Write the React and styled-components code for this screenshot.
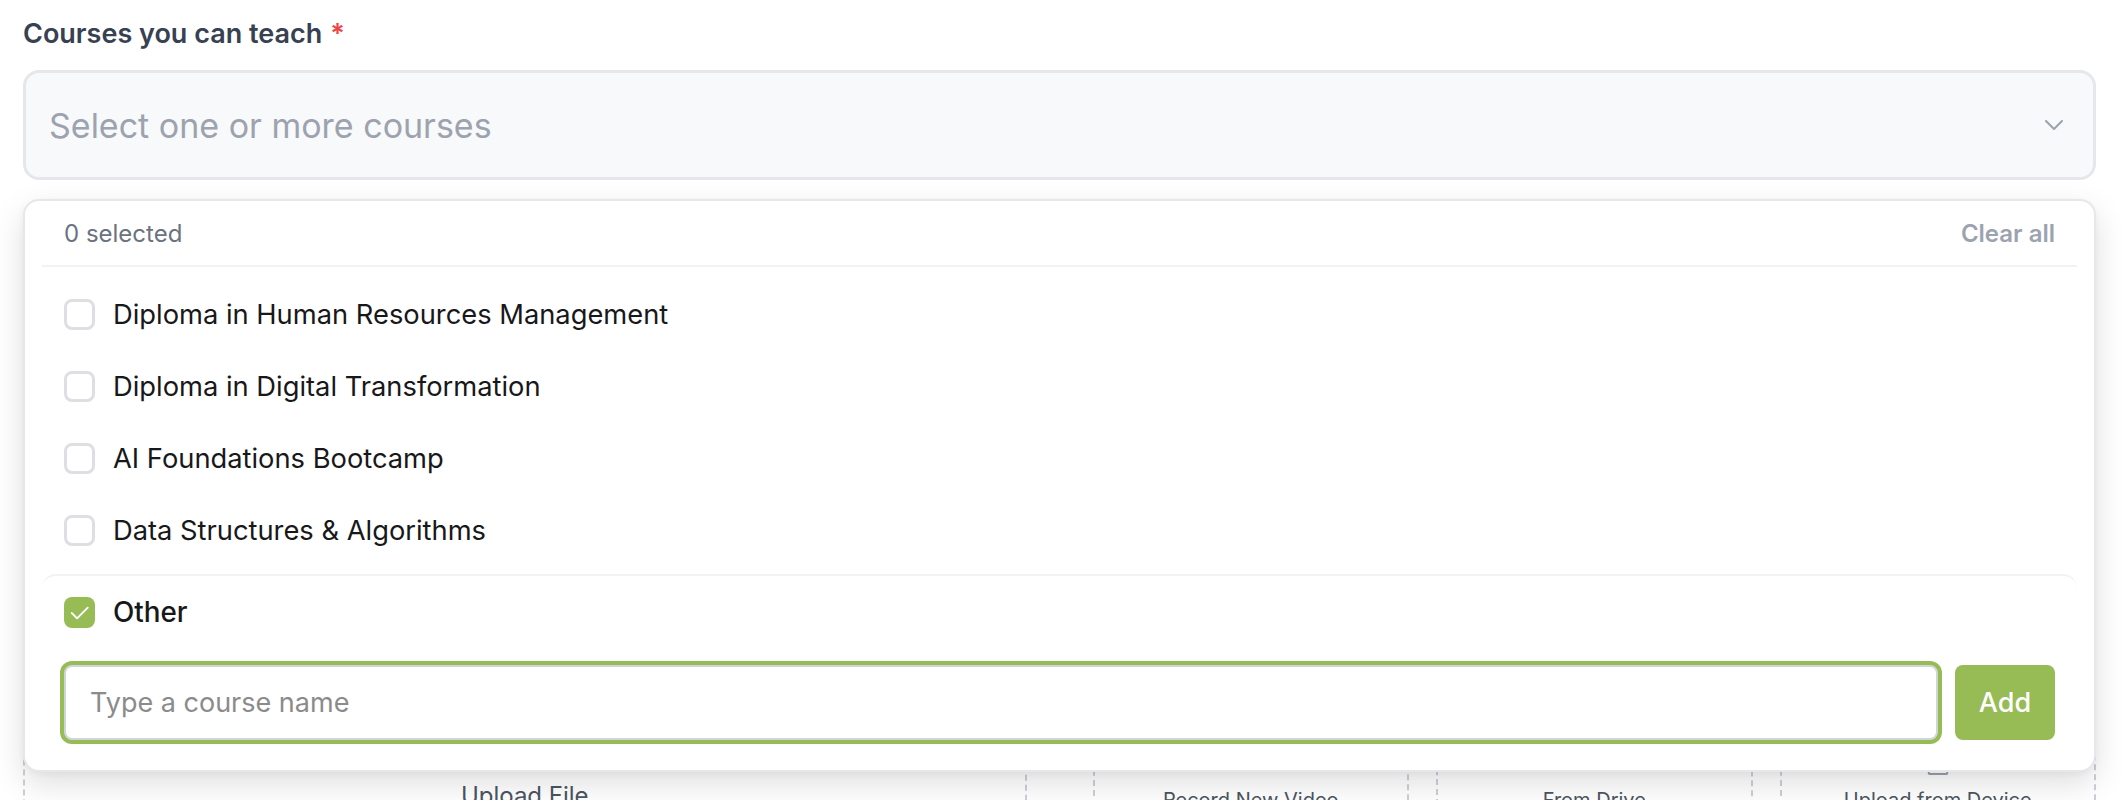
import React from 'react';
import styled, { createGlobalStyle } from 'styled-components';
import { Upload, Video, Laptop } from 'lucide-react';

const GlobalStyle = createGlobalStyle`
  * { box-sizing: border-box; }
  body {
    margin: 0;
    background: #ffffff;
    font-family: Inter, "Noto Sans", sans-serif;
    -webkit-font-smoothing: antialiased;
  }
`;

const Page = styled.div`
  padding: 16px 26px 0 23px;
`;

const Label = styled.div`
  font-size: 27px;
  line-height: 36px;
  font-weight: 600;
  color: #374151;
  margin-bottom: 18px;
`;

const Required = styled.span`
  color: #ef4444;
  margin-left: 8px;
`;

const Field = styled.div`
  position: relative;
`;

const SelectBox = styled.div`
  height: 110px;
  display: flex;
  align-items: center;
  justify-content: space-between;
  padding: 0 30px 0 23px;
  border: 3px solid #e5e7eb;
  border-radius: 16px;
  background: #f8f9fb;
  font-size: 34px;
  color: #9ca3af;
`;

// --- dropdown panel, floats over the form below ---
const Dropdown = styled.div`
  position: absolute;
  top: calc(100% + 19px);
  left: 0;
  right: 0;
  z-index: 10;
  background: #ffffff;
  border: 2px solid #e6e7ea;
  border-radius: 16px;
  padding: 0 17px;
  box-shadow: 0 12px 32px rgba(0, 0, 0, 0.13), 0 2px 6px rgba(0, 0, 0, 0.04);
`;

const PanelHeader = styled.div`
  height: 66px;
  display: flex;
  align-items: center;
  justify-content: space-between;
  padding: 0 22px;
  border-bottom: 2px solid #f1f2f4;
  font-size: 24px;
`;

const Count = styled.span`
  color: #6b7280;
`;

const ClearAll = styled.button`
  border: none;
  background: none;
  padding: 0;
  font: inherit;
  font-weight: 600;
  color: #9ca3af;
  cursor: pointer;
`;

const OptionList = styled.div`
  padding: 11px 0 8px;
`;

const OptionRow = styled.label`
  height: 72px;
  display: flex;
  align-items: center;
  gap: 18px;
  padding-left: 22px;
  font-size: ${p => (p.$strong ? '27.8px' : '27.3px')};
  font-weight: ${p => (p.$strong ? 500 : 400)};
  color: #18181b;
  cursor: pointer;
`;

const Box = styled.span`
  width: 31px;
  height: 31px;
  flex: none;
  display: flex;
  align-items: center;
  justify-content: center;
  border-radius: 8px;
  border: ${p => (p.$checked ? 'none' : '3px solid #dedfe2')};
  background: ${p => (p.$checked ? '#97bb55' : '#ffffff')};
`;

const OtherSection = styled.div`
  border-top: 2px solid #f1f2f4;
  border-radius: 14px 14px 0 0;
  padding-bottom: 30px;
`;

const AddRow = styled.div`
  display: flex;
  align-items: center;
  gap: 17px;
  margin-top: 17px;
  padding: 0 22px;
`;

const CourseInput = styled.input`
  flex: 1;
  height: 75px;
  border: 2px solid #d1d5db;
  border-radius: 8px;
  box-shadow: 0 0 0 4px #97bb55;
  padding: 0 24px;
  font-family: inherit;
  font-size: 27px;
  color: #18181b;
  outline: none;

  &::placeholder {
    color: #8b8b8b;
  }
`;

const AddButton = styled.button`
  width: 100px;
  height: 75px;
  border: none;
  border-radius: 8px;
  background: #97bb55;
  color: #ffffff;
  font-family: inherit;
  font-size: 27px;
  font-weight: 500;
  cursor: pointer;
`;

// --- upload choices, mostly hidden under the open dropdown ---
const UploadGrid = styled.div`
  margin-top: 510px;
  display: grid;
  grid-template-columns: 1fr 1fr;
  gap: 66px;
`;

const SourceGrid = styled.div`
  display: grid;
  grid-template-columns: repeat(3, 1fr);
  gap: 27px;
`;

const UploadCard = styled.div`
  height: 220px;
  border: 2px dashed #cdd1d7;
  border-radius: 12px;
  display: flex;
  flex-direction: column;
  align-items: center;
  padding-top: ${p => (p.$big ? '36px' : '62px')};
  gap: ${p => (p.$big ? '12px' : '8px')};
  color: #9ca3af;
`;

const IconSlot = styled.div`
  height: 24px;
  display: flex;
  align-items: flex-start;
`;

const CardLabel = styled.span`
  font-size: ${p => (p.$big ? '24px' : '20px')};
  line-height: ${p => (p.$big ? '32px' : '28px')};
  color: #4b5563;
`;

const Chevron = () => (
  <svg width="18" height="10" viewBox="0 0 18 10" fill="none">
    <path d="M1 1l8 8 8-8" stroke="#9ca3af" strokeWidth="2" strokeLinecap="round" strokeLinejoin="round" />
  </svg>
);

const Tick = () => (
  <svg width="31" height="31" viewBox="0 0 32 32" fill="none">
    <path d="M8 16.5l5.5 5.5L24.5 11" stroke="#ffffff" strokeWidth="2" strokeLinecap="round" strokeLinejoin="round" />
  </svg>
);

const courses = [
  'Diploma in Human Resources Management',
  'Diploma in Digital Transformation',
  'AI Foundations Bootcamp',
  'Data Structures & Algorithms',
];

const App = () => (
  <>
    <GlobalStyle />
    <Page>
      <Label>
        Courses you can teach<Required>*</Required>
      </Label>
      <Field>
        <SelectBox>
          <span>Select one or more courses</span>
          <Chevron />
        </SelectBox>
        <Dropdown>
          <PanelHeader>
            <Count>0 selected</Count>
            <ClearAll>Clear all</ClearAll>
          </PanelHeader>
          <OptionList>
            {courses.map(name => (
              <OptionRow key={name}>
                <Box />
                {name}
              </OptionRow>
            ))}
          </OptionList>
          <OtherSection>
            <OptionRow $strong>
              <Box $checked>
                <Tick />
              </Box>
              Other
            </OptionRow>
            <AddRow>
              <CourseInput placeholder="Type a course name" />
              <AddButton>Add</AddButton>
            </AddRow>
          </OtherSection>
        </Dropdown>
      </Field>

      <UploadGrid>
        <UploadCard $big>
          <Upload size={40} strokeWidth={1.6} />
          <CardLabel $big>Upload File</CardLabel>
        </UploadCard>
        <SourceGrid>
          <UploadCard>
            <IconSlot>
              <Video size={20} strokeWidth={1.8} />
            </IconSlot>
            <CardLabel>Record New Video</CardLabel>
          </UploadCard>
          <UploadCard>
            <IconSlot>
              <svg width="20" height="20" viewBox="0 0 24 24" fill="none" stroke="currentColor" strokeWidth="1.8" strokeLinejoin="round">
                <path d="M8.5 3h7l6 10-3.5 5H6L2.5 13z" />
              </svg>
            </IconSlot>
            <CardLabel>From Drive</CardLabel>
          </UploadCard>
          <UploadCard>
            <IconSlot>
              <Laptop size={24} strokeWidth={1.8} />
            </IconSlot>
            <CardLabel>Upload from Device</CardLabel>
          </UploadCard>
        </SourceGrid>
      </UploadGrid>
    </Page>
  </>
);

export default App;
